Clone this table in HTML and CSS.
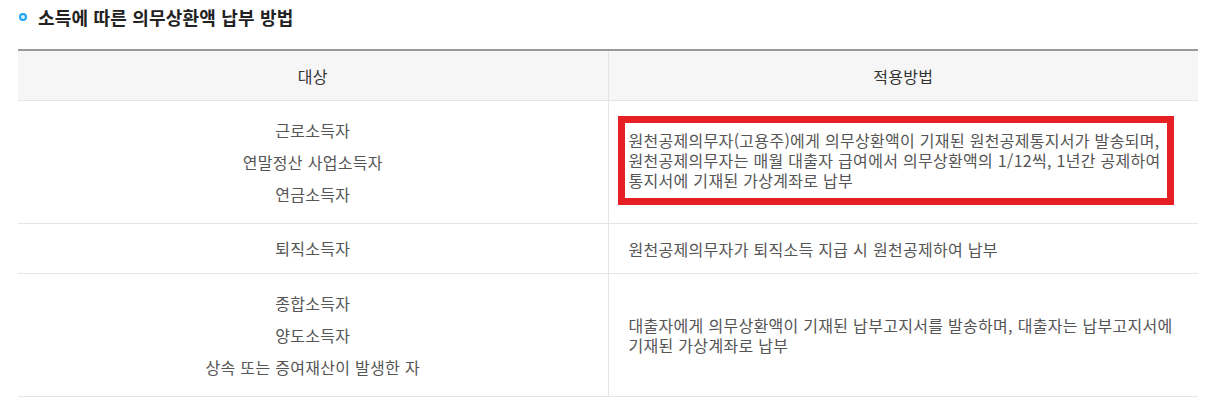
FILE: index.html
```html
<!DOCTYPE html>
<html lang="ko">
<head>
<meta charset="utf-8">
<title>소득에 따른 의무상환액 납부 방법</title>
<link rel="stylesheet" href="styles.css">
</head>
<body>
<div class="page">
  <h3 class="title"><span class="bullet"></span>소득에 따른 의무상환액 납부 방법</h3>
  <table class="tbl">
    <colgroup><col class="c1"><col class="c2"></colgroup>
    <thead>
      <tr><th>대상</th><th>적용방법</th></tr>
    </thead>
    <tbody>
      <tr class="r1">
        <td class="target"><p>근로소득자</p><p>연말정산 사업소득자</p><p>연금소득자</p></td>
        <td class="method"><div class="mark">원천공제의무자(고용주)에게 의무상환액이 기재된 원천공제통지서가 발송되며,<br>원천공제의무자는 매월 대출자 급여에서 의무상환액의 1/12씩, 1년간 공제하여<br>통지서에 기재된 가상계좌로 납부</div></td>
      </tr>
      <tr class="r2">
        <td class="target"><p>퇴직소득자</p></td>
        <td class="method">원천공제의무자가 퇴직소득 지급 시 원천공제하여 납부</td>
      </tr>
      <tr class="r3">
        <td class="target"><p>종합소득자</p><p>양도소득자</p><p>상속 또는 증여재산이 발생한 자</p></td>
        <td class="method">대출자에게 의무상환액이 기재된 납부고지서를 발송하며, 대출자는 납부고지서에 기재된 가상계좌로 납부</td>
      </tr>
    </tbody>
  </table>
</div>
</body>
</html>
```

FILE: styles.css
```css
html, body {
  margin: 0;
  padding: 0;
  background: #fff;
}
body {
  font-family: "Noto Sans CJK KR", "Noto Sans", sans-serif;
  color: #555;
}
.page {
  padding: 0 15px 0 18px;
}
.title {
  display: flex;
  align-items: center;
  gap: 11px;
  margin: 0;
  padding-left: 1px;
  height: 34px;
  font-size: 18px;
  font-weight: bold;
  color: #222;
  letter-spacing: 0.2px;
}
.bullet {
  box-sizing: border-box;
  width: 8px;
  height: 8px;
  border-radius: 50%;
  border: 2.5px solid #1ea5ef;
  background: #d9f0fd;
  flex: none;
}
.tbl {
  margin-top: 15px;
  width: 1180px;
  border-collapse: collapse;
  border-top: 2px solid #999;
  font-size: 16px;
  letter-spacing: 0.3px;
  table-layout: fixed;
}
.c1 { width: 590px; }
.c2 { width: 590px; }
.tbl th {
  height: 49px;
  padding: 0;
  background: #f6f6f6;
  font-weight: normal;
  color: #333;
  border-bottom: 1px solid #e5e5e5;
  border-left: 1px solid #e5e5e5;
}
.tbl th:first-child { border-left: 0; }
.tbl td {
  border-bottom: 1px solid #e5e5e5;
  border-left: 1px solid #e5e5e5;
  vertical-align: middle;
}
.tbl td:first-child { border-left: 0; }
.target {
  text-align: center;
  padding: 13px 20px;
}
.target p {
  margin: 0;
  line-height: 32px;
}
.r2 .target {
  padding: 8px 20px 9px;
}
.method {
  padding: 0 20px;
  line-height: 20px;
  text-align: left;
}
.mark {
  box-sizing: border-box;
  width: 556px;
  margin: 0 0 3px -11px;
  padding: 7px 4px 8px;
  border: 7px solid #e51f24;
  line-height: 20px;
  white-space: nowrap;
}
```
